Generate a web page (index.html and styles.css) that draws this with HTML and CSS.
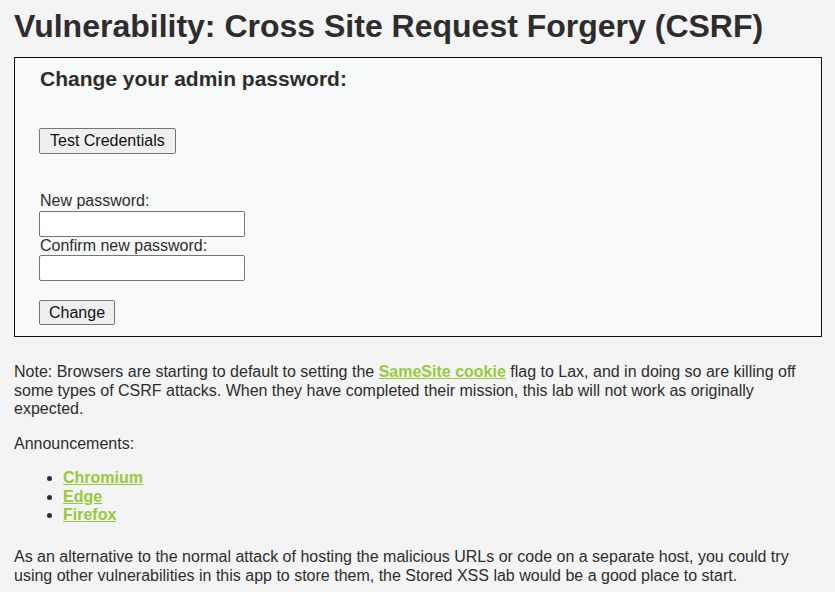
FILE: index.html
```html
<!DOCTYPE html>
<html lang="en">
<head>
<meta charset="utf-8">
<title>Vulnerability: Cross Site Request Forgery (CSRF)</title>
<link rel="stylesheet" href="styles.css">
</head>
<body>
<div class="page">
  <h1 class="title">Vulnerability: Cross Site Request Forgery (CSRF)</h1>
  <div class="code-area">
    <h3 class="subtitle">Change your admin password:</h3>
    <div class="test-row">
      <button class="btn btn-test" type="button">Test Credentials</button>
    </div>
    <form class="pw-form" action="#" method="GET">
      <label class="field-label">New password:</label>
      <input class="field" type="password" autocomplete="off" name="password_new">
      <label class="field-label">Confirm new password:</label>
      <input class="field" type="password" autocomplete="off" name="password_conf">
      <div class="submit-row">
        <input class="btn btn-change" type="submit" value="Change" name="Change">
      </div>
    </form>
  </div>
  <p class="note">Note: Browsers are starting to default to setting the <a class="link" href="#">SameSite cookie</a> flag to Lax, and in doing so are killing off some types of CSRF attacks. When they have completed their mission, this lab will not work as originally expected.</p>
  <p class="announce">Announcements:</p>
  <ul class="links">
    <li><a class="link" href="#">Chromium</a></li>
    <li><a class="link" href="#">Edge</a></li>
    <li><a class="link" href="#">Firefox</a></li>
  </ul>
  <p class="alt">As an alternative to the normal attack of hosting the malicious URLs or code on a separate host, you could try using other vulnerabilities in this app to store them, the Stored XSS lab would be a good place to start.</p>
</div>
</body>
</html>
```
FILE: styles.css
```css
html, body {
  margin: 0;
  padding: 0;
  background: #f4f4f4;
}
body {
  font-family: "Liberation Sans", Arial, sans-serif;
  font-size: 16px;
  color: #2d2d2d;
}
.page {
  padding: 8px 13px 0 14px;
}
.title {
  margin: 0 0 13px 0;
  font-size: 32px;
  font-weight: bold;
  line-height: 36px;
  color: #2d2d2d;
}
.code-area {
  border: 1px solid #111;
  background: #f8f9f9;
  padding: 10px 25px 11px 25px;
}
.subtitle {
  margin: 0;
  font-size: 21px;
  font-weight: bold;
  line-height: 22px;
}
.test-row {
  margin-top: 38px;
  margin-bottom: 38px;
}
.btn {
  font-family: "Liberation Sans", Arial, sans-serif;
  color: #111;
  background: #efefef;
  border: 1px solid #767676;
  border-radius: 2px;
  margin: 0 0 0 -1px;
}
.btn-test {
  font-size: 16px;
  height: 26px;
  padding: 0 10px;
}
.btn-change {
  font-size: 16px;
  height: 25px;
  padding: 0 9px;
}
.pw-form {
  display: flex;
  flex-direction: column;
  align-items: flex-start;
  margin: 0;
}
.field-label {
  line-height: 18.5px;
  display: block;
}
.field {
  display: block;
  box-sizing: border-box;
  width: 206px;
  height: 26px;
  margin: 0 0 0 -1px;
  border: 1px solid #767676;
  border-radius: 2px;
  background: #fff;
}
.submit-row {
  margin-top: 19px;
}
.note {
  margin: 26px 0 0 0;
  line-height: 18.5px;
}
.announce {
  margin: 16px 0 0 0;
  line-height: 18.5px;
}
.links {
  margin: 16px 0 0 0;
  padding-left: 49px;
  line-height: 18.5px;
}
.link {
  color: #98c93c;
  font-weight: bold;
  text-decoration: underline;
}
.alt {
  margin: 23.5px 0 0 0;
  line-height: 18.5px;
}
```
